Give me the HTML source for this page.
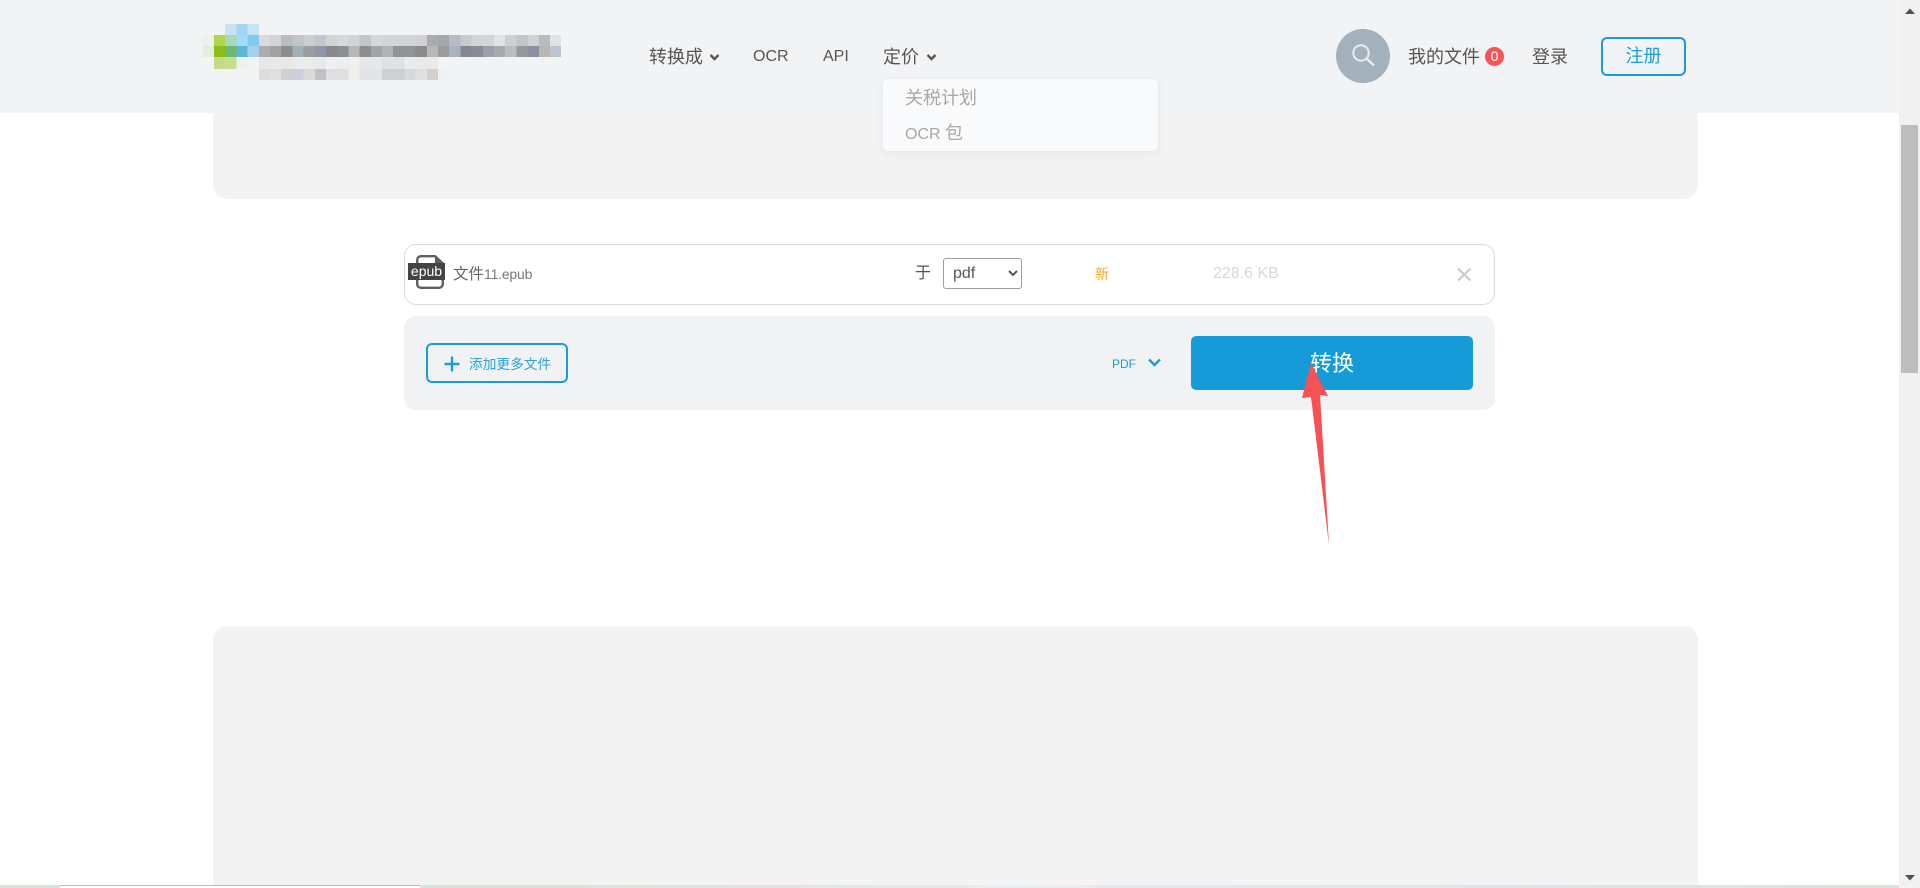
<!DOCTYPE html>
<html lang="zh">
<head>
<meta charset="utf-8">
<title>转换</title>
<style>
html,body{margin:0;padding:0;width:1920px;height:888px;overflow:hidden;background:#fff;font-family:"Liberation Sans","Noto Sans CJK SC",sans-serif;}
.a{position:absolute;white-space:nowrap;}
.t{position:absolute;white-space:nowrap;color:#555;line-height:24px;height:24px;}
svg{position:absolute;display:block;}
</style>
</head>
<body>
<!-- gray cards -->
<div class="a" style="left:213px;top:90px;width:1485px;height:109px;background:#f3f3f4;border-radius:0 0 14px 14px;"></div>
<div class="a" style="left:213px;top:626px;width:1485px;height:262px;background:#f3f3f3;border-radius:14px 14px 0 0;"></div>

<!-- header -->
<div class="a" style="left:0;top:0;width:1899px;height:113px;background:#f1f3f5;"></div>

<!-- logo mosaic -->
<svg style="left:203px;top:24px" width="380" height="56" viewBox="0 0 380 56" shape-rendering="crispEdges">
<g id="r0"><rect x="22.2" y="0" width="11.2" height="11" fill="#c6e3f2"/><rect x="33.4" y="0" width="11.2" height="11" fill="#9dd7f4"/><rect x="44.6" y="0" width="11.2" height="11" fill="#c6e5f2"/></g>
<rect x="0" y="11" width="11" height="11" fill="#eef0ec"/><rect x="0" y="22" width="11" height="11" fill="#e8ecdf"/>
<g transform="translate(11,11)">
<rect x="0" width="11.2" height="11" fill="#b2d450"/><rect x="11.2" width="11.2" height="11" fill="#a8d8bb"/><rect x="22.4" width="11.2" height="11" fill="#a5dcf5"/><rect x="33.6" width="11.2" height="11" fill="#7fcaee"/><rect x="44.8" width="11.2" height="11" fill="#d9dadb"/><rect x="56" width="11.2" height="11" fill="#d2d5d8"/><rect x="67.2" width="11.2" height="11" fill="#b9bbbd"/><rect x="78.4" width="11.2" height="11" fill="#bdc5cb"/><rect x="89.6" width="11.2" height="11" fill="#cbcdd0"/><rect x="100.8" width="11.2" height="11" fill="#c3c6cc"/><rect x="112" width="11.2" height="11" fill="#d3d3d4"/><rect x="123.2" width="11.2" height="11" fill="#d6d8db"/><rect x="134.4" width="11.2" height="11" fill="#cfd5da"/><rect x="145.6" width="11.2" height="11" fill="#c3c5c6"/><rect x="156.8" width="11.2" height="11" fill="#d5d7da"/><rect x="168" width="11.2" height="11" fill="#d2d5d8"/><rect x="179.2" width="11.2" height="11" fill="#d2d4d8"/><rect x="190.4" width="11.2" height="11" fill="#d1d3d5"/><rect x="201.6" width="11.2" height="11" fill="#d0d1d3"/><rect x="212.8" width="11.2" height="11" fill="#a9abaf"/><rect x="224" width="11.2" height="11" fill="#a5a8aa"/><rect x="235.2" width="11.2" height="11" fill="#b6bcc4"/><rect x="246.4" width="11.2" height="11" fill="#c9cacd"/><rect x="257.6" width="11.2" height="11" fill="#d3d4d6"/><rect x="268.8" width="11.2" height="11" fill="#d2d5da"/><rect x="280" width="11.2" height="11" fill="#e2e3e5"/><rect x="291.2" width="11.2" height="11" fill="#ccd0d3"/><rect x="302.4" width="11.2" height="11" fill="#c3c4c6"/><rect x="313.6" width="11.2" height="11" fill="#d0d1d5"/><rect x="324.8" width="11.2" height="11" fill="#b9babd"/><rect x="336" width="11.2" height="11" fill="#e0e3e6"/>
</g>
<g transform="translate(11,22)">
<rect x="0" width="11.2" height="11" fill="#8fbf17"/><rect x="11.2" width="11.2" height="11" fill="#6cb96f"/><rect x="22.4" width="11.2" height="11" fill="#5cb8da"/><rect x="33.6" width="11.2" height="11" fill="#a3d2ec"/><rect x="44.8" width="11.2" height="11" fill="#aaacaf"/><rect x="56" width="11.2" height="11" fill="#a0a1a3"/><rect x="67.2" width="11.2" height="11" fill="#8c8d8f"/><rect x="78.4" width="11.2" height="11" fill="#a2b1b7"/><rect x="89.6" width="11.2" height="11" fill="#9a9da0"/><rect x="100.8" width="11.2" height="11" fill="#8e97a8"/><rect x="112" width="11.2" height="11" fill="#88898b"/><rect x="123.2" width="11.2" height="11" fill="#8c8e92"/><rect x="134.4" width="11.2" height="11" fill="#b6b9bc"/><rect x="145.6" width="11.2" height="11" fill="#8f8d8e"/><rect x="156.8" width="11.2" height="11" fill="#a0a5aa"/><rect x="168" width="11.2" height="11" fill="#b1b3b7"/><rect x="179.2" width="11.2" height="11" fill="#929396"/><rect x="190.4" width="11.2" height="11" fill="#929395"/><rect x="201.6" width="11.2" height="11" fill="#8a8b8d"/><rect x="212.8" width="11.2" height="11" fill="#b9b8b6"/><rect x="224" width="11.2" height="11" fill="#9a9c9e"/><rect x="235.2" width="11.2" height="11" fill="#a9b3be"/><rect x="246.4" width="11.2" height="11" fill="#85878c"/><rect x="257.6" width="11.2" height="11" fill="#868d96"/><rect x="268.8" width="11.2" height="11" fill="#9ba0a8"/><rect x="280" width="11.2" height="11" fill="#a9aaaa"/><rect x="291.2" width="11.2" height="11" fill="#b9bec2"/><rect x="302.4" width="11.2" height="11" fill="#98989b"/><rect x="313.6" width="11.2" height="11" fill="#8b90a3"/><rect x="324.8" width="11.2" height="11" fill="#b7b8b6"/><rect x="336" width="11.2" height="11" fill="#bcc4cf"/>
</g>
<g transform="translate(11,33)">
<rect x="0" width="11.2" height="12" fill="#c5d98b"/><rect x="11.2" width="11.2" height="12" fill="#c5de8e"/><rect x="22.4" width="11.2" height="12" fill="#eef2ee"/><rect x="44.8" width="11.2" height="12" fill="#e7e8e9"/><rect x="56" width="11.2" height="12" fill="#e7e9ea"/><rect x="67.2" width="11.2" height="12" fill="#e9e9e8"/><rect x="78.4" width="11.2" height="12" fill="#eaecee"/><rect x="89.6" width="11.2" height="12" fill="#e9ebec"/><rect x="100.8" width="11.2" height="12" fill="#e9eaec"/><rect x="112" width="11.2" height="12" fill="#eff0f3"/><rect x="123.2" width="11.2" height="12" fill="#ecedef"/><rect x="134.4" width="11.2" height="12" fill="#f0f0f0"/><rect x="145.6" width="11.2" height="12" fill="#e6e7e9"/><rect x="156.8" width="11.2" height="12" fill="#e7e8ea"/><rect x="168" width="11.2" height="12" fill="#dfe2e5"/><rect x="179.2" width="11.2" height="12" fill="#dfe2e5"/><rect x="190.4" width="11.2" height="12" fill="#eaebed"/><rect x="201.6" width="11.2" height="12" fill="#e8e9eb"/><rect x="212.8" width="11.2" height="12" fill="#eceae8"/><rect x="224" width="11.2" height="12" fill="#f1f4f6"/>
</g>
<g transform="translate(11,45)">
<rect x="44.8" width="11.2" height="11" fill="#dcdddd"/><rect x="56" width="11.2" height="11" fill="#dfe0df"/><rect x="67.2" width="11.2" height="11" fill="#cfd0d3"/><rect x="78.4" width="11.2" height="11" fill="#c9d0d9"/><rect x="89.6" width="11.2" height="11" fill="#dadbd9"/><rect x="100.8" width="11.2" height="11" fill="#c0c1c4"/><rect x="112" width="11.2" height="11" fill="#dfdfe0"/><rect x="123.2" width="11.2" height="11" fill="#dedfe1"/><rect x="134.4" width="11.2" height="11" fill="#f1efea"/><rect x="145.6" width="11.2" height="11" fill="#e2e3e5"/><rect x="156.8" width="11.2" height="11" fill="#e3e4e6"/><rect x="168" width="11.2" height="11" fill="#cfd0d2"/><rect x="179.2" width="11.2" height="11" fill="#cfd0d2"/><rect x="190.4" width="11.2" height="11" fill="#d7d8da"/><rect x="201.6" width="11.2" height="11" fill="#dfe0e2"/><rect x="212.8" width="11.2" height="11" fill="#d2d0ce"/><rect x="224" width="11.2" height="11" fill="#eef1f4"/>
</g>
</svg>

<!-- nav -->
<span class="t" style="left:649px;top:45px;font-size:18px;">转换成</span>
<svg style="left:709px;top:53px" width="11" height="9" viewBox="0 0 11 9"><path d="M1.5 2 L5.5 6 L9.5 2" fill="none" stroke="#555" stroke-width="2.4"/></svg>
<span class="t" style="left:753px;top:45px;font-size:16px;">OCR</span>
<span class="t" style="left:823px;top:45px;font-size:16px;">API</span>
<span class="t" style="left:883px;top:45px;font-size:18px;">定价</span>
<svg style="left:926px;top:53px" width="11" height="9" viewBox="0 0 11 9"><path d="M1.5 2 L5.5 6 L9.5 2" fill="none" stroke="#555" stroke-width="2.4"/></svg>

<!-- dropdown -->
<div class="a" style="left:883px;top:79px;width:275px;height:72px;background:#f9fafc;border-radius:6px;box-shadow:0 2px 8px rgba(180,185,200,.22);"></div>
<span class="t" style="left:905px;top:86px;font-size:18px;color:#a8a8a8;">关税计划</span>
<span class="t" style="left:905px;top:121px;font-size:18px;color:#a8a8a8;"><span style="font-size:16px;">OCR </span>包</span>

<!-- right header -->
<div class="a" style="left:1336px;top:29px;width:54px;height:54px;border-radius:50%;background:#a3b1bd;"></div>
<svg style="left:1348px;top:41px" width="30" height="30" viewBox="0 0 30 30"><circle cx="13" cy="12" r="7.7" fill="none" stroke="#e9edf0" stroke-width="2"/><path d="M19 18 L26 24.5" fill="none" stroke="#e9edf0" stroke-width="2.4"/></svg>
<span class="t" style="left:1408px;top:45px;font-size:18px;">我的文件</span>
<div class="a" style="left:1485px;top:47px;width:19px;height:19px;border-radius:50%;background:#f55555;color:#fff;font-size:14px;line-height:19px;text-align:center;">0</div>
<span class="t" style="left:1532px;top:45px;font-size:18px;">登录</span>
<div class="a" style="left:1601px;top:37px;width:81px;height:35px;border:2px solid #1a9cdb;border-radius:6px;color:#1a9cdb;font-size:18px;line-height:35px;text-align:center;">注册</div>

<!-- file row -->
<div class="a" style="left:404px;top:244px;width:1089px;height:59px;border:1px solid #dcdcdc;border-radius:12px;background:#fff;"></div>
<svg style="left:416px;top:255px" width="28" height="34" viewBox="0 0 28 34"><path d="M5 1.2 H19 L26.8 8.5 V29 A3.8 3.8 0 0 1 23 32.8 H5 A3.8 3.8 0 0 1 1.2 29 V5 A3.8 3.8 0 0 1 5 1.2 Z" fill="#fff" stroke="#5c6064" stroke-width="2.4"/><path d="M19 1.2 V8.5 H26.8 Z" fill="#5c6064"/></svg>
<div class="a" style="left:408px;top:263px;width:37px;height:17px;background:#444;color:#fff;font-size:14px;line-height:16px;text-align:center;">epub</div>
<span class="t" style="left:453px;top:262px;font-size:15.5px;color:#666;">文件<span style="font-size:14px;letter-spacing:-.2px;color:#777;">11.epub</span></span>
<span class="t" style="left:915px;top:262px;font-size:16px;color:#555;">于</span>
<select class="a" style="left:943px;top:258px;width:79px;height:31px;font-size:16px;padding:0 0 0 5px;color:#555;background:#fff;border:1px solid #9a9ea4;border-radius:3px;font-family:inherit;"><option>pdf</option></select>
<span class="t" style="left:1095px;top:262px;font-size:14px;color:#f5a623;">新</span>
<span class="t" style="left:1213px;top:262px;font-size:16px;color:#d8d8d8;">228.6 KB</span>
<svg style="left:1456px;top:267px" width="17" height="15" viewBox="0 0 17 15"><path d="M2 1.5 L14.5 13.5 M14.5 1.5 L2 13.5" fill="none" stroke="#c8c8c8" stroke-width="2"/></svg>

<!-- action panel -->
<div class="a" style="left:404px;top:316px;width:1091px;height:94px;background:#f1f2f4;border-radius:12px;"></div>
<div class="a" style="left:426px;top:343px;width:138px;height:36px;border:2px solid #1a9cdb;border-radius:6px;"></div>
<svg style="left:444px;top:356px" width="16" height="16" viewBox="0 0 16 16"><path d="M8 0.5 V15.5 M0.5 8 H15.5" fill="none" stroke="#1a9cdb" stroke-width="2.4"/></svg>
<span class="t" style="left:469px;top:353px;font-size:13.7px;color:#2aa3dc;">添加更多文件</span>
<span class="t" style="left:1112px;top:352px;font-size:12px;color:#1a9cdb;">PDF</span>
<svg style="left:1147px;top:357px" width="15" height="11" viewBox="0 0 15 11"><path d="M2 2.5 L7.5 8 L13 2.5" fill="none" stroke="#1a9cdb" stroke-width="2.4"/></svg>
<div class="a" style="left:1191px;top:336px;width:282px;height:54px;background:#169bd9;border-radius:5px;color:#fff;font-size:22px;line-height:56px;text-align:center;">转换</div>

<!-- red arrow -->
<svg style="left:1295px;top:355px" width="45" height="195" viewBox="1295 355 45 195"><path d="M1311 363 L1328 396 L1320 395 L1329 545 L1311 397 L1302 398 Z" fill="#f65154"/></svg>

<!-- bottom strip -->
<div class="a" style="left:0;top:885px;width:1899px;height:3px;background:linear-gradient(90deg,#d5e5dc 0,#d5e5dc 30%,#e8e8e8 50%,#eaeef2 54%,#dfeaf2 60%,#dbe6e4 85%,#d5e3da 100%);"></div>
<div class="a" style="left:60px;top:885px;width:360px;height:3px;background:#fff;border-top:1px solid #bbb;box-sizing:border-box;"></div>

<!-- scrollbar -->
<div class="a" style="left:1899px;top:0;width:21px;height:888px;background:#f1f1f1;"></div>
<div class="a" style="left:1901px;top:125px;width:17px;height:248px;background:#bdbdbd;"></div>
<svg style="left:1904px;top:8px" width="12" height="7" viewBox="0 0 12 7"><path d="M6 .5 L11 6 H1 Z" fill="#505050"/></svg>
<svg style="left:1904px;top:874px" width="12" height="7" viewBox="0 0 12 7"><path d="M1 1 H11 L6 6.5 Z" fill="#505050"/></svg>
</body>
</html>
